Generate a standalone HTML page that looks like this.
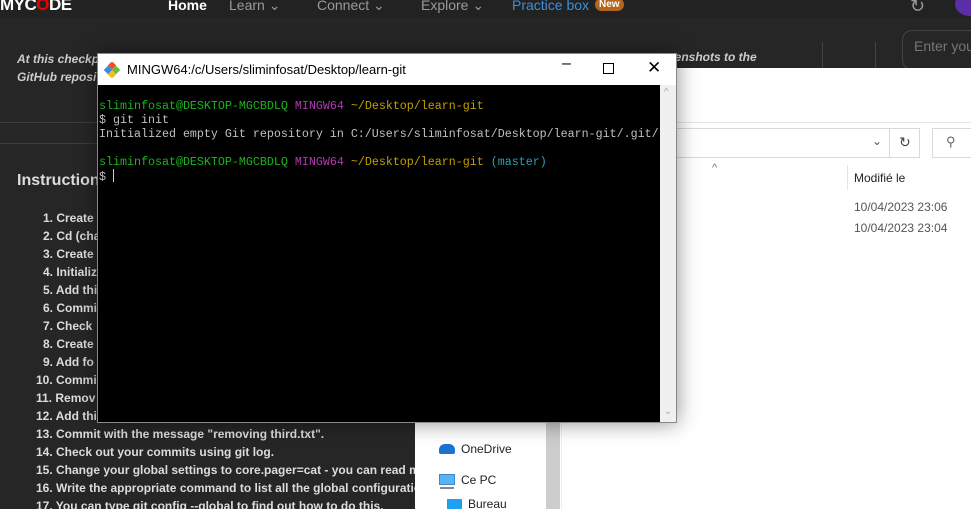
<!DOCTYPE html>
<html><head><meta charset="utf-8"><style>
*{margin:0;padding:0;box-sizing:border-box}
html,body{width:971px;height:509px;overflow:hidden}
body{background:#262626;font-family:"Liberation Sans",sans-serif;position:relative}
.a{position:absolute;white-space:nowrap}
.nav{left:0;top:0;width:971px;height:18px;background:#222}
.nav span{position:absolute;top:-3px;font-size:14px;color:#9a9a9a}
.list{left:0;top:209px;color:#dcdcdc;font-size:12px;font-weight:bold;line-height:18px}
.list div{position:absolute;white-space:nowrap}
.term{left:97px;top:53px;width:580px;height:370px;background:#000;border:1px solid #888;box-shadow:0 0 20px rgba(0,0,0,.45)}
.tt{left:0;top:0;width:578px;height:31px;background:#fff}
.mono{font-family:"Liberation Mono",monospace;font-size:11.67px;line-height:14px;white-space:pre;color:#c0c0c0}
.g{color:#1cb51c}.m{color:#b33ab3}.y{color:#c0a000}.c{color:#2aa1b3}
.ex{font-family:"Liberation Sans",sans-serif;font-size:12px;color:#222}
</style></head><body>
<div class="a nav">
<span style="left:0;top:-5px;font-size:17px;font-weight:bold;color:#fff;letter-spacing:-0.5px">MYC<span style="position:static;color:#e00;font-size:17px">O</span>DE</span>
<span style="left:168px;color:#fff;font-weight:bold">Home</span>
<span style="left:229px">Learn ⌄</span>
<span style="left:317px">Connect ⌄</span>
<span style="left:421px">Explore ⌄</span>
<span style="left:512px;color:#3b8fdc">Practice box</span>
<span style="left:595px;top:-2px;background:#b5651d;color:#fff;font-size:10px;font-weight:bold;border-radius:7px;padding:1px 4px">New</span>
<span style="left:910px;top:-4px;font-size:18px">↻</span>
<span style="left:955px;top:-8px;width:30px;height:24px;border-radius:50%;background:#5b2ea8"></span>
</div>
<div class="a" style="left:17px;top:50px;color:#ccc;font-size:12px;font-weight:bold;font-style:italic;line-height:18px">At this checkpoint<br>GitHub reposi</div>
<div class="a" style="left:668px;top:50px;color:#ccc;font-size:12px;font-weight:bold;font-style:italic">eenshots to the</div>
<div class="a" style="left:822px;top:42px;width:1px;height:26px;background:#444"></div>
<div class="a" style="left:875px;top:42px;width:1px;height:26px;background:#444"></div>
<div class="a" style="left:902px;top:30px;width:80px;height:40px;border:1px solid #444;border-radius:10px"></div>
<div class="a" style="left:914px;top:38px;color:#777;font-size:14px">Enter you</div>
<div class="a" style="left:0;top:122px;width:420px;height:1px;background:#3c3c3c"></div>
<div class="a" style="left:0;top:143px;width:420px;height:1px;background:#3c3c3c"></div>
<div class="a" style="left:17px;top:172px;color:#ddd;font-size:16px;font-weight:bold">Instruction</div>
<div class="a list">
<div style="left:43px;top:0">1. Create</div>
<div style="left:43px;top:18px">2. Cd (cha</div>
<div style="left:43px;top:36px">3. Create</div>
<div style="left:43px;top:54px">4. Initializ</div>
<div style="left:43px;top:72px">5. Add thi</div>
<div style="left:43px;top:90px">6. Commi</div>
<div style="left:43px;top:108px">7. Check</div>
<div style="left:43px;top:126px">8. Create</div>
<div style="left:43px;top:144px">9. Add fo</div>
<div style="left:36px;top:162px">10. Commi</div>
<div style="left:36px;top:180px">11. Remov</div>
<div style="left:36px;top:198px">12. Add thi</div>
<div style="left:36px;top:216px">13. Commit with the message "removing third.txt".</div>
<div style="left:36px;top:234px">14. Check out your commits using git log.</div>
<div style="left:36px;top:252px">15. Change your global settings to core.pager=cat - you can read more</div>
<div style="left:36px;top:270px">16. Write the appropriate command to list all the global configuration</div>
<div style="left:36px;top:288px">17. You can type git config --global to find out how to do this.</div>
</div>
<!-- explorer -->
<div class="a" style="left:415px;top:68px;width:556px;height:441px;background:#fff"></div>
<div class="a" style="left:677px;top:122px;width:294px;height:1px;background:#e5e5e5"></div>
<div class="a" style="left:660px;top:128px;width:260px;height:30px;border:1px solid #d9d9d9"></div>
<div class="a" style="left:889px;top:128px;width:1px;height:30px;background:#d9d9d9"></div>
<div class="a" style="left:872px;top:134px;font-size:12px;color:#555">⌄</div>
<div class="a" style="left:899px;top:134px;font-size:14px;color:#444">↻</div>
<div class="a" style="left:932px;top:128px;width:50px;height:30px;border:1px solid #d9d9d9"></div>
<div class="a" style="left:946px;top:134px;font-size:13px;color:#666">⚲</div>
<div class="a" style="left:712px;top:162px;font-size:11px;color:#777">^</div>
<div class="a" style="left:847px;top:165px;width:1px;height:25px;background:#e5e5e5"></div>
<div class="a ex" style="left:854px;top:171px">Modifié le</div>
<div class="a ex" style="left:854px;top:200px;color:#555">10/04/2023 23:06</div>
<div class="a ex" style="left:854px;top:221px;color:#555">10/04/2023 23:04</div>
<div class="a" style="left:546px;top:423px;width:14px;height:86px;background:#cdcdcd"></div>
<div class="a" style="left:561px;top:423px;width:1px;height:86px;background:#eee"></div>
<div class="a" style="left:439px;top:444px;width:16px;height:10px;background:#1a73d1;border-radius:6px 6px 2px 2px"></div>
<div class="a ex" style="left:461px;top:442px">OneDrive</div>
<div class="a" style="left:439px;top:474px;width:16px;height:11px;background:#5ab4f0;border:1px solid #3a8cc8"></div>
<div class="a" style="left:440px;top:487px;width:14px;height:2px;background:#888"></div>
<div class="a ex" style="left:461px;top:473px">Ce PC</div>
<div class="a" style="left:447px;top:499px;width:15px;height:12px;background:#1ea0f0"></div>
<div class="a ex" style="left:468px;top:497px">Bureau</div>
<!-- terminal -->
<div class="a term">
<div class="a tt"></div>
<svg class="a" style="left:6px;top:8px" width="16" height="16" viewBox="0 0 16 16"><rect x="5" y="0.5" width="6" height="6" transform="rotate(45 8 3.5)" fill="#f05030"/><rect x="1" y="5" width="6" height="6" transform="rotate(45 4 8)" fill="#3a8be0"/><rect x="9" y="5" width="6" height="6" transform="rotate(45 12 8)" fill="#60c040"/><rect x="5" y="9.5" width="6" height="6" transform="rotate(45 8 12.5)" fill="#f0c020"/></svg>
<div class="a" style="left:29px;top:8px;font-size:13px;color:#000">MINGW64:/c/Users/sliminfosat/Desktop/learn-git</div>
<div class="a" style="left:464px;top:1px;font-size:16px;color:#000">–</div>
<div class="a" style="left:505px;top:9px;width:11px;height:11px;border:1px solid #000"></div>
<div class="a" style="left:549px;top:4px;font-size:17px;color:#000">✕</div>
<div class="a" style="left:562px;top:31px;width:16px;height:337px;background:#f0f0f0"></div>
<div class="a" style="left:566px;top:33px;font-size:10px;color:#aaa">^</div>
<div class="a" style="left:566px;top:352px;font-size:10px;color:#aaa">⌄</div>
<div class="a mono" style="left:1px;top:45px"><span class="g">sliminfosat@DESKTOP-MGCBDLQ</span> <span class="m">MINGW64</span> <span class="y">~/Desktop/learn-git</span>
$ git init
Initialized empty Git repository in C:/Users/sliminfosat/Desktop/learn-git/.git/

<span class="g">sliminfosat@DESKTOP-MGCBDLQ</span> <span class="m">MINGW64</span> <span class="y">~/Desktop/learn-git</span> <span class="c">(master)</span>
$ <span style="display:inline-block;width:1px;height:13px;background:#ccc;vertical-align:-2px"></span></div>
</div>
</body></html>
